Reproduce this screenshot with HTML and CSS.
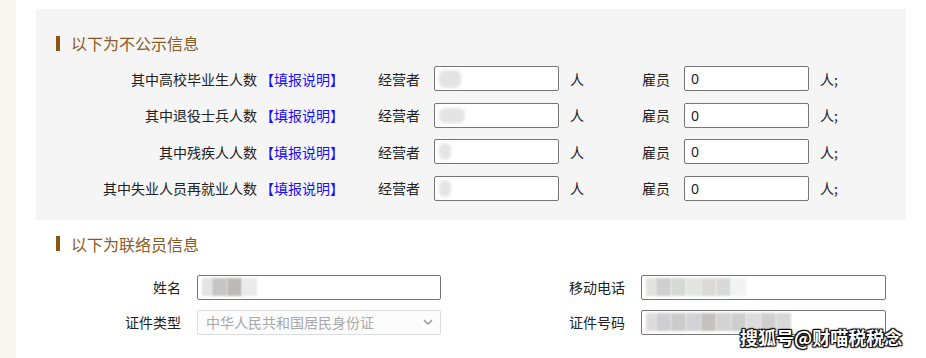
FILE: index.html
```html
<!DOCTYPE html>
<html>
<head lang="zh">
    <meta charset="UTF-8">
    <title>不公示信息</title>
    <link rel="stylesheet" href="styles.css">
</head>
<body>
<div class="page">
    <div class="strip"></div>
    <div class="main">
        <div class="panel">
            <h3 class="title">以下为不公示信息</h3>
            <div class="row">
                <span class="label">其中高校毕业生人数</span>
                <a class="tip">【填报说明】</a>
                <span class="who">经营者</span>
                <div class="field"><span class="blob b1"></span></div>
                <span class="unit">人</span>
                <span class="who2">雇员</span>
                <div class="field">0</div>
                <span class="unit">人;</span>
            </div>
            <div class="row">
                <span class="label">其中退役士兵人数</span>
                <a class="tip">【填报说明】</a>
                <span class="who">经营者</span>
                <div class="field"><span class="blob b2"></span></div>
                <span class="unit">人</span>
                <span class="who2">雇员</span>
                <div class="field">0</div>
                <span class="unit">人;</span>
            </div>
            <div class="row">
                <span class="label">其中残疾人人数</span>
                <a class="tip">【填报说明】</a>
                <span class="who">经营者</span>
                <div class="field"><span class="blob b3"></span></div>
                <span class="unit">人</span>
                <span class="who2">雇员</span>
                <div class="field">0</div>
                <span class="unit">人;</span>
            </div>
            <div class="row">
                <span class="label">其中失业人员再就业人数</span>
                <a class="tip">【填报说明】</a>
                <span class="who">经营者</span>
                <div class="field"><span class="blob b3"></span></div>
                <span class="unit">人</span>
                <span class="who2">雇员</span>
                <div class="field">0</div>
                <span class="unit">人;</span>
            </div>
        </div>

        <div class="contact">
            <h3 class="title">以下为联络员信息</h3>
            <div class="grid">
                <span class="clabel">姓名</span>
                <div class="field wide">
                    <span class="px" style="background:#e4e4e4"></span><span class="px" style="background:#c6c6c6"></span><span class="px" style="background:#bdbab6"></span><span class="px" style="background:#eaeaea"></span>
                </div>
                <span class="clabel">移动电话</span>
                <div class="field wide">
                    <span class="px" style="background:#e2e2e0"></span><span class="px" style="background:#d0cfd0"></span><span class="px" style="background:#d6d8d6"></span><span class="px" style="background:#e2e4e2"></span><span class="px" style="background:#dcdad6"></span><span class="px" style="background:#d8dada"></span><span class="px" style="background:#f3f3f3"></span>
                </div>
                <span class="clabel">证件类型</span>
                <div class="select">
                    <span>中华人民共和国居民身份证</span>
                    <svg width="10" height="6" viewBox="0 0 10 6"><path d="M1 1 L5 5 L9 1" fill="none" stroke="#999" stroke-width="1.5"/></svg>
                </div>
                <span class="clabel">证件号码</span>
                <div class="field wide">
                    <span class="px" style="background:#dedcda"></span><span class="px" style="background:#cfced2"></span><span class="px" style="background:#cbcbcb"></span><span class="px" style="background:#d2d2d6"></span><span class="px" style="background:#c4c0bc"></span><span class="px" style="background:#d2d2d2"></span><span class="px" style="background:#cdcdcd"></span><span class="px" style="background:#dcdcdc"></span><span class="px" style="background:#cfcfcf"></span><span class="px" style="background:#d8d8d8"></span>
                </div>
            </div>
        </div>
    </div>
</div>
<div class="mark">搜狐号@财喵税税念</div>
</body>
</html>
```

FILE: styles.css
```css
*{
    margin: 0;
    padding: 0;
    box-sizing: border-box;
}
body{
    font-family: "Microsoft YaHei", "Noto Sans CJK SC", sans-serif;
    font-size: 14px;
    color: #222;
    background: #fff;
    overflow: hidden;
}
.page{
    display: flex;
    height: 358px;
}
.strip{
    width: 16px;
    background: #f9f6f0;
}
.main{
    padding: 9px 0 0 20px;
}
.panel{
    width: 870px;
    background: #f5f5f5;
    padding: 24px 0 7.5px 0;
}
.title{
    display: flex;
    align-items: center;
    height: 20px;
    padding-left: 20px;
    font-size: 16px;
    font-weight: normal;
    color: #8b5a24;
    margin-bottom: 13px;
}
.title::before{
    content: "";
    width: 4px;
    height: 15px;
    background: #8b5512;
    margin-right: 11px;
}
.row{
    display: flex;
    align-items: center;
    height: 25px;
    margin-bottom: 11.5px;
}
.label{
    width: 221px;
    text-align: right;
}
.tip{
    width: 84px;
    margin-left: 3px;
    color: #1a0dff;
    cursor: pointer;
}
.who{
    margin-left: 34px;
    width: 42px;
}
.who2{
    width: 28px;
}
.field{
    display: flex;
    align-items: center;
    width: 125px;
    height: 25px;
    margin-left: 14px;
    padding-left: 6px;
    background: #fff;
    border: 1px solid #767676;
    border-radius: 2px;
    font-family: "Microsoft YaHei", "Noto Sans", sans-serif;
}
.unit{
    margin-left: 11px;
    width: 58px;
    margin-right: 14px;
}
.row .unit:last-child{
    margin-right: 0;
}
.blob{
    display: block;
    background: #e4e4e4;
    filter: blur(1.5px);
    border-radius: 6px;
}
.b1{
    width: 22px;
    height: 18px;
    margin-left: -2px;
}
.b2{
    width: 26px;
    height: 15px;
    margin-left: -2px;
}
.b3{
    width: 12px;
    height: 17px;
    margin-left: -2px;
}
.contact{
    width: 870px;
    padding-top: 14px;
}
.contact .title{
    margin-bottom: 21px;
}
.grid{
    display: grid;
    grid-template-columns: 145px 244px 168px 245px;
    grid-auto-rows: 25px;
    column-gap: 16px;
    row-gap: 10px;
    align-items: center;
}
.clabel{
    text-align: right;
}
.grid .field{
    margin-left: 0;
    width: auto;
    padding-left: 4px;
}
.px{
    display: block;
    width: 15px;
    height: 18px;
    filter: blur(1px);
}
.px:first-child{
    width: 10px;
}
.select{
    display: flex;
    align-items: center;
    justify-content: space-between;
    height: 25px;
    padding: 0 7px 0 8px;
    border: 1px solid #ddd;
    border-radius: 2px;
    background: #fcfcfc;
    color: #a8a8a8;
}
.mark{
    position: absolute;
    left: 740px;
    top: 324px;
    color: #fff;
    font-size: 18px;
    font-weight: bold;
    text-shadow: 0 0 2px #000, 1px 1px 1px #000, -1px -1px 1px #000, 1px -1px 1px #000, -1px 1px 1px #000;
}
```
